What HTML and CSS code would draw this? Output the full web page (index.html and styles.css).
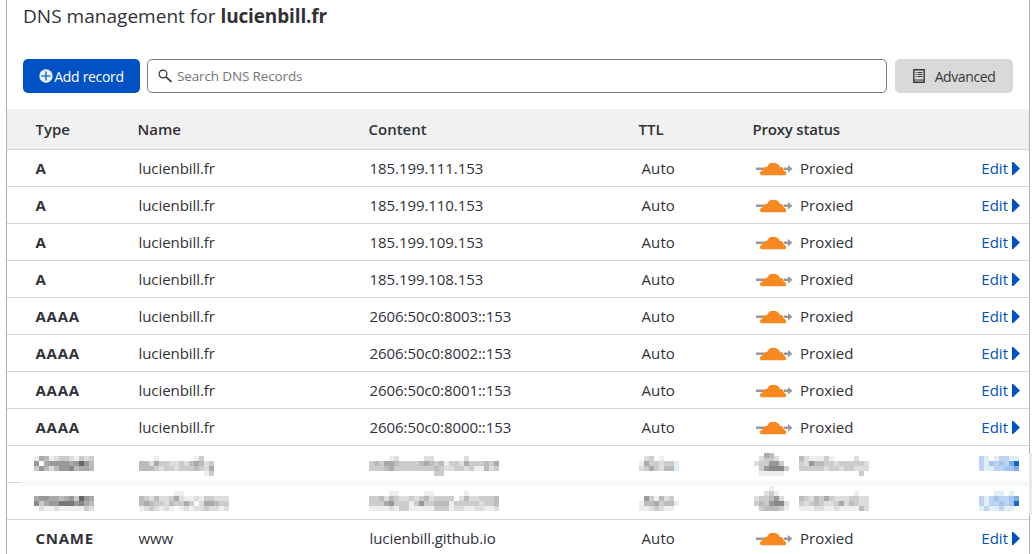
FILE: index.html
```html
<!DOCTYPE html>
<html lang="en">
<head>
<meta charset="utf-8">
<title>DNS management</title>
<link rel="stylesheet" href="styles.css">
</head>
<body>
<svg class="defs" width="0" height="0">
  <symbol id="cloud" viewBox="0 0 37 14">
    <path d="M0 5.500h8v2.500H0zM28 5.500h4V3l4.500 3.700L32 10.500V8h-4z" fill="#96989d"/>
    <path d="M5.500 13.200C4.500 13 4 12.200 4 11.200 4 9.500 5.200 8.600 6.700 8.500 6.400 6.300 8.500 4.500 11.200 5 12 2.300 14 .8 17.200.8c3.500 0 6 1.700 6.800 4.300 2.300-.2 3.800 1 3.800 3.400 1.500.4 2.300 1.500 2.300 3 0 1-.3 1.500-1.100 1.700z" fill="#f6891f"/>
  </symbol>
</svg>
<main class="panel">
  <h1 class="title"><span>DNS management for</span> <b>lucienbill.fr</b></h1>
  <div class="toolbar">
    <button class="btn add"><svg width="14" height="14" viewBox="0 0 14 14"><circle cx="7" cy="7" r="6.700" fill="#e9f1fb"/><path d="M7 2.500v9M2.500 7h9" stroke="#2579d9" stroke-width="1.600"/></svg><span>Add record</span></button>
    <label class="search"><svg width="15" height="14" viewBox="0 0 15 14" fill="none" stroke="#303236"><circle cx="5" cy="5" r="3.900" stroke-width="1.200"/><path d="M7.800 7.800l5.700 5" stroke-width="1.600"/></svg><span>Search DNS Records</span></label>
    <button class="btn advanced"><svg width="12" height="14" viewBox="0 0 12 14"><path d="M.8.800h10.400v12.400H.8z" fill="none" stroke="#36393a" stroke-width="1.400"/><path d="M1 11h10" stroke="#36393a" stroke-width="1"/><path d="M2.500 3.500h1M4.500 3.500h5M2.500 5.500h1M4.500 5.500h5M2.500 7.500h1M4.500 7.500h5" stroke="#36393a" stroke-width="1.200"/></svg><span>Advanced</span></button>
  </div>
  <div class="row head"><span>Type</span><span>Name</span><span>Content</span><span>TTL</span><span class="status-head">Proxy status</span></div>
  <div id="records"></div>
</main>
<div class="divider-smudge"></div>
<div class="edge-smudge"></div>
<script src="records.js"></script>
</body>
</html>
```
FILE: styles.css
```css
* { box-sizing: border-box; }
body { margin: 0; height: 554px; overflow: hidden; background: #fff; color: #313238; font-family: "Open Sans", "Noto Sans", sans-serif; font-size: 15px; position: relative; }
.defs { position: absolute; }
.panel { margin-left: 6px; width: 1024px; height: 554px; overflow: hidden; border-left: 1px solid #aeb0b2; border-right: 1px solid #aeb0b2; }
.title { margin: 0; padding: 2px 0 0 16px; height: 59px; font-size: 19px; line-height: 28px; font-weight: 400; white-space: nowrap; }
.title span { letter-spacing: .03px; }
.title b { font-weight: 700; letter-spacing: -.14px; }
.toolbar { display: flex; gap: 7px; height: 50px; padding-left: 16px; }
.btn { height: 34px; border: 0; border-radius: 5px; display: flex; align-items: center; justify-content: center; padding: 0; font: 14px "Open Sans", sans-serif; white-space: nowrap; }
.add { width: 117px; background: #0051c3; color: #fff; gap: 1px; letter-spacing: -.33px; }
.search { width: 740px; height: 34px; display: flex; align-items: center; gap: 4px; padding-left: 10px; border: 1px solid #797b7d; border-radius: 5px; color: #757575; font-size: 13.5px; letter-spacing: -.14px; }
.advanced { width: 118px; margin-left: 1px; background: #d9d9d9; color: #36393a; gap: 10px; letter-spacing: -.4px; }
.row { display: grid; grid-template-columns: 102px 231px 270px 114px 1fr auto; align-items: center; height: 37px; padding: 0 9px 0 29px; border-bottom: 1px solid #d5d7d8; white-space: nowrap; }
.head { height: 41px; background: #f1f1f1; font-weight: 600; }
.head span { margin-left: -.5px; }
.status-head { letter-spacing: -.2px; }
.type { font-weight: 700; letter-spacing: .75px; margin-left: -.5px; }
.name, .content { padding-left: .5px; letter-spacing: -.07px; }
.ttl { padding-left: 2.5px; letter-spacing: .1px; }
.status { display: flex; align-items: center; gap: 7px; padding-left: 3px; }
.status svg { position: relative; top: 1px; }
.edit { display: flex; align-items: center; gap: 4px; color: #0051c3; }
.masked { position: relative; }
.mosaic { position: absolute; left: 0; top: 0; }
.divider-smudge { position: absolute; left: 21px; top: 481px; width: 1011px; height: 5px; background: #f7f8f7; }
.edge-smudge { position: absolute; left: 1029px; top: 453px; width: 3px; height: 62px; background: #e9e9e9; }
```
FILE: records.js
```js
const records = [
  ["A", "lucienbill.fr", "185.199.111.153"],
  ["A", "lucienbill.fr", "185.199.110.153"],
  ["A", "lucienbill.fr", "185.199.109.153"],
  ["A", "lucienbill.fr", "185.199.108.153"],
  ["AAAA", "lucienbill.fr", "2606:50c0:8003::153"],
  ["AAAA", "lucienbill.fr", "2606:50c0:8002::153"],
  ["AAAA", "lucienbill.fr", "2606:50c0:8001::153"],
  ["AAAA", "lucienbill.fr", "2606:50c0:8000::153"],
  { mask: [
    [27, 10, ["eabedccdecdc", "9fa9999a969b", "c9bdb998baab"]],
    [132, 10, ["...e.......ecf.", "bbdaccddcdbabdc", "bbbcdccdcccbcda", ".............ec"]],
    [362, 10, ["....ed.....dd......d.....f", "cbcaabccccbabcbeccdacccbca", "cccbaccccccccbcddccdceebdc", ".............cc..........."]],
    [632, 10, [".dc.e...", "eaccdccp", "dcacdbbp"]],
    [747, 10, [".dccd..", "dcc99c.", ".c9888c", ".eeeee."]],
    [757, 7, ["ab"]],
    [792, 10, ["bdeeece....d..", "cd9bbccdcccccd", "cccccdccdccddd", "............c."]],
    [972, 10, ["qp.pqqpp", "qprqrqst", "qppqqrrs"]]
  ] },
  { mask: [
    [27, 13, ["a99aaba9c69a", "8ca9977798ab", "fdeedeeeeecd"]],
    [132, 8, [".......ee.........", "bcdbddcadeedeccddd", "babccdbccacfdaabcc", "edcdedefededdcdded"]],
    [362, 8, ["....ee.....ee......e......", "ccbdbcddcdcbdccccfdbddcccb", "ccca9cccec9ccbbbecccccdccb", "eeeedecceeeeeccceddeeddeed"]],
    [632, 13, [".9cebdc.", "ebbacbbp", "eedcdee."]],
    [747, 3, ["...e...", "..dce..", "dccb9d.", "cbc988d", ".cbbbce"]],
    [792, 8, ["...........e..", "bcdbcacdddccdd", "cdcbcddcadbcdd", "eeeddeedeeeebd"]],
    [972, 8, ["...pp.p.", "qpqrqqrs", "qpqqrqrt", "pqppqpp."]]
  ] },
  ["CNAME", "www", "lucienbill.github.io"]
];
const blues = { p: "#e0eef6", q: "#bdd3f1", r: "#a6c4ed", s: "#79afe9", t: "#1666c0" };
const colour = c => blues[c] || "#" + c + c + c;

function mosaic(groups) {
  let out = '<svg class="mosaic" width="1022" height="37" shape-rendering="crispEdges">';
  for (const [x, y, lines] of groups) lines.forEach((line, j) => [...line].forEach((c, i) => {
    if (c !== ".") out += `<rect x="${x + i * 5}" y="${y + j * 5}" width="5" height="5" fill="${colour(c)}"/>`;
  }));
  return out + "</svg>";
}

document.getElementById("records").innerHTML = records.map(r => r.mask
  ? `<div class="row masked">${mosaic(r.mask)}</div>`
  : `<div class="row"><span class="type">${r[0]}</span><span class="name">${r[1]}</span><span class="content">${r[2]}</span><span class="ttl">Auto</span><span class="status"><svg width="37" height="14"><use href="#cloud"/></svg><span>Proxied</span></span><span class="edit"><span>Edit</span><svg width="8" height="13" viewBox="0 0 8 13"><path d="M0 0h1.200L8 6.500 1.200 13H0z" fill="#0051c3"/></svg></span></div>`).join("");
```
